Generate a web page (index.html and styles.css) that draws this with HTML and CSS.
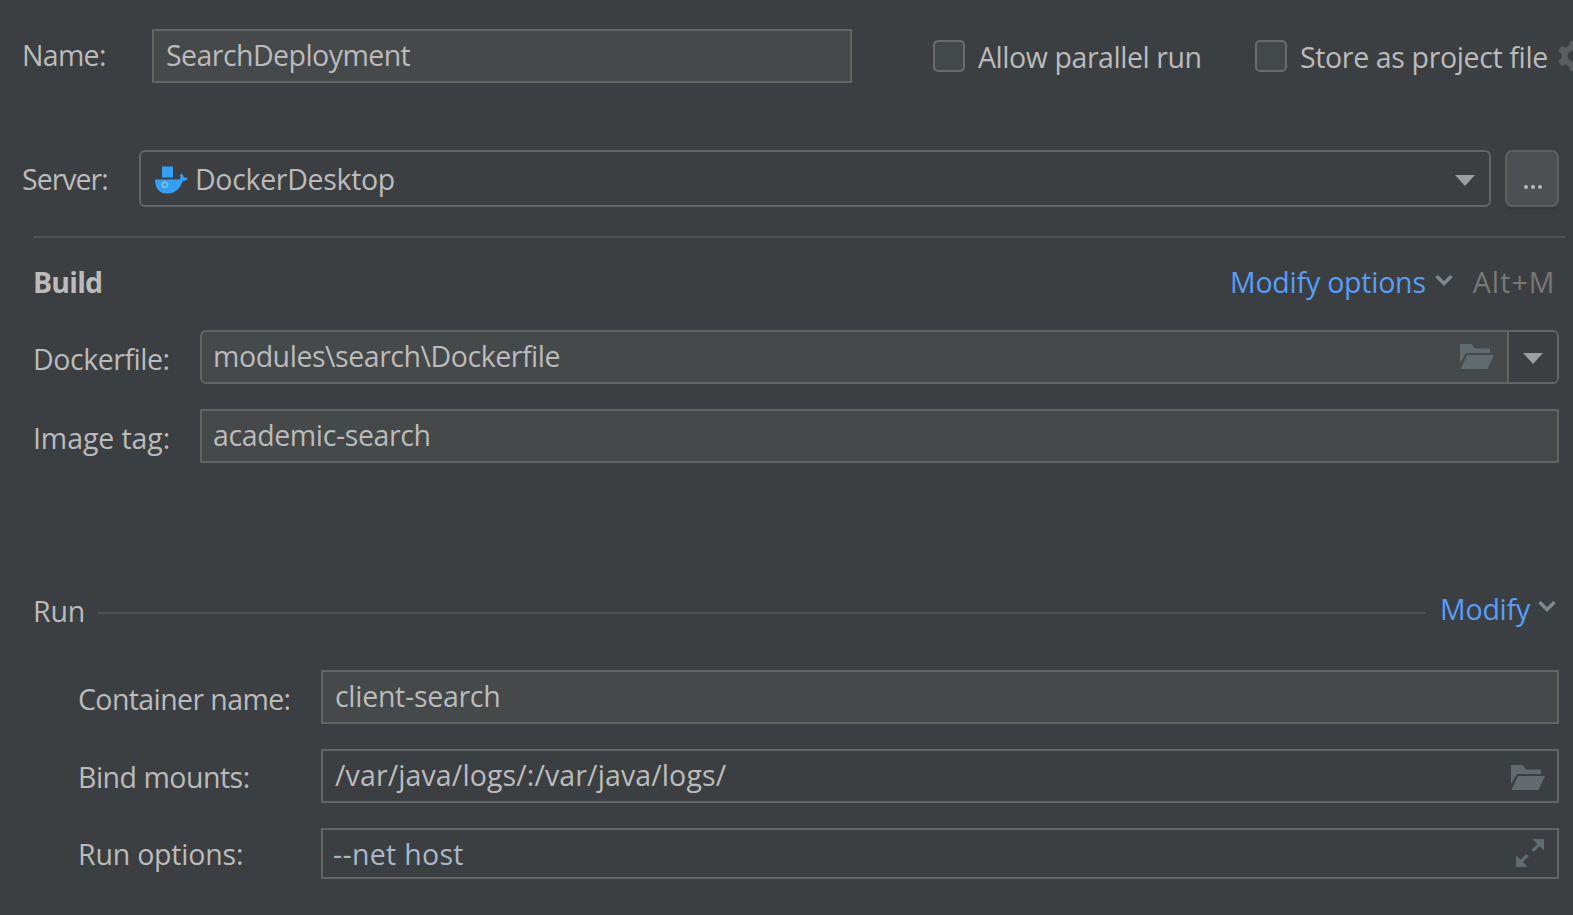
FILE: index.html
```html
<!DOCTYPE html>
<html lang="en">
<head>
<meta charset="utf-8">
<title>Run configuration</title>
<link rel="stylesheet" href="styles.css">
</head>
<body>
<svg class="defs" aria-hidden="true">
  <symbol id="folder" viewBox="0 0 34 26">
    <path d="M0 0H11.5L15 4.5H30V9H6L0 19Z"/>
    <path d="M7 11H34L27.5 25H0.5Z"/>
  </symbol>
  <symbol id="chevron" viewBox="0 0 18 13">
    <path d="M1.5 2L9 9.5L16.5 2" fill="none" stroke="currentColor" stroke-width="3.4"/>
  </symbol>
  <symbol id="triangle" viewBox="0 0 20 11"><path d="M0 0H20L10 11Z"/></symbol>
</svg>
<main class="panel">
  <div class="row row-name">
    <span class="label t-name">Name:</span>
    <div class="field"><span class="t-deploy">SearchDeployment</span></div>
    <div class="check check-parallel"><i class="box"></i><span class="t-parallel">Allow parallel run</span></div>
    <div class="check check-store"><i class="box"></i><span class="t-store">Store as project file</span></div>
    <svg class="gear" viewBox="0 0 30 30">
      <path fill-rule="evenodd" d="M12 0H18L19 4.6L22.2 6.4L26.7 5L29.7 10.2L26.2 13.3V16.7L29.7 19.8L26.7 25L22.2 23.6L19 25.4L18 30H12L11 25.4L7.8 23.6L3.3 25L.3 19.8L3.8 16.7V13.3L.3 10.2L3.3 5L7.8 6.4L11 4.6ZM15 9.5A5.5 5.5 0 1 0 15 20.5A5.5 5.5 0 1 0 15 9.5Z"/>
    </svg>
  </div>

  <div class="row row-server">
    <span class="label t-server">Server:</span>
    <div class="field combo">
      <svg class="docker" viewBox="0 0 33 28">
        <path fill="#35a0f3" d="M7 0.5H18V11.5H7Z M0 13.5H24.6C26 12.3 25.2 9.5 25 8.8L26.3 7.4C28 8.8 28.8 10.2 28.8 11.3L33 12.2C32 14 30.3 15 27.5 15.2C25.5 22.5 20 27.5 12 27.5C4 27.5 0 22 0 13.5Z"/>
        <circle cx="9.8" cy="18.8" r="2.7" fill="none" stroke="#b5dcfa" stroke-width="1"/>
      </svg>
      <span class="t-docker">DockerDesktop</span>
      <svg class="triangle"><use href="#triangle"/></svg>
    </div>
    <button class="browse"><i></i><i></i><i></i></button>
  </div>

  <hr class="separator">

  <div class="row row-build">
    <h2 class="label">Build</h2>
    <a class="link t-modopt">Modify options</a>
    <svg class="chevron"><use href="#chevron"/></svg>
    <span class="shortcut">Alt+M</span>
  </div>

  <div class="row row-dockerfile">
    <span class="label t-dfile">Dockerfile:</span>
    <div class="field split">
      <span class="t-path">modules\search\Dockerfile</span>
      <svg class="folder"><use href="#folder"/></svg>
      <div class="drop"><svg class="triangle"><use href="#triangle"/></svg></div>
    </div>
  </div>

  <div class="row row-tag">
    <span class="label t-tag">Image tag:</span>
    <div class="field"><span class="t-academic">academic-search</span></div>
  </div>

  <div class="row row-run">
    <span class="label t-run">Run</span>
    <i class="rule"></i>
    <a class="link t-modify">Modify</a>
    <svg class="chevron"><use href="#chevron"/></svg>
  </div>

  <div class="row row-sub row-container">
    <span class="label t-container">Container name:</span>
    <div class="field"><span class="t-client">client-search</span></div>
  </div>
  <div class="row row-sub row-bind">
    <span class="label t-bind">Bind mounts:</span>
    <div class="field dark">
      <span class="t-var">/var/java/logs/:/var/java/logs/</span>
      <svg class="folder"><use href="#folder"/></svg>
    </div>
  </div>
  <div class="row row-sub row-options">
    <span class="label t-options">Run options:</span>
    <div class="field dark">
      <span class="t-net">--net host</span>
      <svg class="expand" viewBox="0 0 28 28">
        <path d="M16.5 0H28V11.5L23.7 7.3L17.8 13L15.5 10.8L21.2 5Z M0 16.5L4.6 20.7L10.4 15L12.6 17.2L7 23L11.5 28H0Z"/>
      </svg>
    </div>
  </div>
</main>
</body>
</html>
```
FILE: styles.css
```css
* { box-sizing: border-box; }
body {
  margin: 0;
  background: #3c3f41;
  color: #bbbbbb;
  font-family: "Open Sans", "Noto Sans", sans-serif;
  font-size: 28.5px;
  line-height: 42px;
  font-variant-ligatures: none;
  white-space: nowrap;
  overflow: hidden;
}
.defs { position: absolute; width: 0; height: 0; }
svg { flex: none; display: block; }

.panel {
  width: 1573px;
  height: 915px;
  padding-top: 29px;
  display: flex;
  flex-direction: column;
  overflow: hidden;
}
.row { display: flex; align-items: flex-start; flex: none; }
.label { flex: none; margin: 0; font-size: inherit; }

.field {
  height: 54px;
  flex: none;
  display: flex;
  align-items: flex-start;
  border: 2px solid #646464;
  background: #45494a;
  padding: 3px 0 0 11px;
}
.field.dark { background: #3c3f41; }

/* Name and flags */
.row-name { height: 121px; padding-left: 22px; }
.row-name .label { width: 130px; padding-top: 5px; }
.row-name .field { width: 700px; padding-left: 12px; }
.check { display: flex; flex: none; padding-top: 7px; }
.check-parallel { margin-left: 80.5px; width: 322px; }
.check-store { width: 297px; }
.box {
  width: 32px;
  height: 32px;
  margin: 4px 13.5px 0 0;
  border: 2px solid #6b6b6b;
  border-radius: 5px;
  background: #43494a;
  flex: none;
}
.gear { width: 30px; height: 30px; margin: 12px 0 0 6px; fill: #5c5d5e; }

/* Server */
.row-server { height: 86px; padding-left: 22px; }
.row-server .label { width: 117px; padding-top: 8px; }
.combo {
  width: 1352px;
  height: 57px;
  border-radius: 6px;
  background: #3c3f41;
  padding: 6px 14px 0 14px;
}
.docker { width: 33px; height: 28px; margin: 8px 7px 0 0; }
.triangle { width: 20px; height: 11px; fill: #9b9ea1; }
.combo .triangle { margin: 17px 0 0 auto; }
.browse {
  width: 54px;
  height: 57px;
  margin-left: 14px;
  padding: 33px 0 0 2px;
  display: flex;
  justify-content: center;
  align-items: flex-start;
  gap: 3px;
  border: 2px solid #5e6060;
  border-radius: 7px;
  background: #4c5052;
  box-shadow: 0 3px 1px #37393b;
}
.browse i { width: 4px; height: 4px; border-radius: 2px; background: #bbbbbb; }

.separator {
  width: 1532px;
  height: 2px;
  margin: 0 0 0 33px;
  border: 0;
  flex: none;
  background: #515151;
}

/* Build */
.row-build { height: 92px; padding: 23px 0 0 33px; }
.row-build .label { width: 1197px; font-weight: 700; letter-spacing: -0.8px; }
.link { color: #589df6; flex: none; }
.chevron { width: 18px; height: 13px; color: #7f888d; }
.row-build .chevron { margin: 13px 20px 0 9px; }
.shortcut { color: #787878; letter-spacing: 1.1px; }

.row-dockerfile { height: 79px; padding-left: 33px; }
.row-dockerfile .label { width: 167px; padding-top: 8px; }
.split { width: 1359px; border-radius: 6px; padding-right: 0; }
.split .folder { margin: 9px 0 0 auto; }
.folder { width: 34px; height: 26px; fill: #616a6d; }
.drop {
  width: 50px;
  height: 50px;
  margin: -3px 0 0 13px;
  padding: 21px 0 0 14px;
  border-left: 2px solid #646464;
  border-radius: 0 4px 4px 0;
  background: #3c3f41;
  flex: none;
}

.row-tag { height: 173px; padding-left: 33px; }
.row-tag .label { width: 167px; padding-top: 8px; }
.row-tag .field { width: 1359px; }

/* Run */
.row-run { height: 88px; padding: 6px 0 0 33px; }
.row-run .label { width: 65px; padding-top: 2px; }
.rule { width: 1328px; height: 2px; margin-top: 24px; background: #515151; }
.row-run .link { margin-left: 14px; }
.row-run .chevron { margin: 12px 0 0 8px; }

.row-sub { height: 79px; padding-left: 78px; }
.row-sub .label { width: 243px; padding-top: 8px; }
.row-sub .field { width: 1238px; padding-left: 12px; }
.row-bind .label { padding-top: 7px; }
.row-bind .field { padding-right: 12px; }
.row-bind .folder { margin: 11px 0 0 auto; }
.row-options .label { padding-top: 5px; }
.row-options .field { height: 51px; padding-right: 13px; padding-left: 10px; color: #a9b7c6; }
.expand { width: 28px; height: 28px; margin: 6px 0 0 auto; fill: #616a6d; }

/* Tracking per caption */
.t-name { letter-spacing: -0.7px; }
.t-deploy { letter-spacing: -0.55px; }
.t-parallel { letter-spacing: -0.43px; }
.t-store { letter-spacing: -0.36px; }
.t-server { letter-spacing: -1px; }
.t-docker { letter-spacing: -0.32px; }
.t-modopt { letter-spacing: -0.22px; }
.t-dfile { letter-spacing: -0.45px; }
.t-tag { letter-spacing: -0.1px; }
.t-path { letter-spacing: -0.45px; }
.t-academic { letter-spacing: -0.38px; }
.t-run { letter-spacing: -0.1px; }
.t-modify { letter-spacing: -0.2px; }
.t-container { letter-spacing: -0.6px; }
.t-client { letter-spacing: -0.28px; }
.t-bind { letter-spacing: -0.5px; }
.t-options { letter-spacing: -0.2px; }
.t-var { letter-spacing: 0.12px; }
.t-net { letter-spacing: 0.3px; }
```
